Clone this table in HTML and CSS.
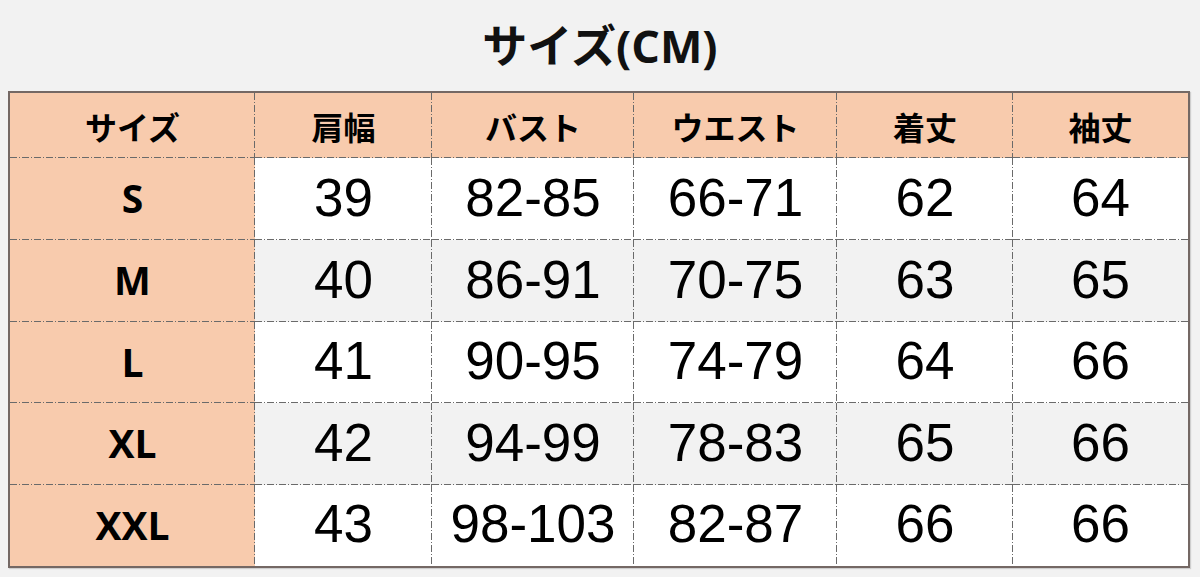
FILE: index.html
```html
<!DOCTYPE html>
<html lang="ja">
<head>
<meta charset="utf-8">
<link rel="stylesheet" href="styles.css">
</head>
<body>
<h1 class="title">サイズ(CM)</h1>
<div class="table">
  <div class="c hd">サイズ</div><div class="c hd">肩幅</div><div class="c hd">バスト</div><div class="c hd">ウエスト</div><div class="c hd">着丈</div><div class="c hd">袖丈</div>
  <div class="c sz">S</div><div class="c n">39</div><div class="c n">82-85</div><div class="c n">66-71</div><div class="c n">62</div><div class="c n">64</div>
  <div class="c sz">M</div><div class="c n alt">40</div><div class="c n alt">86-91</div><div class="c n alt">70-75</div><div class="c n alt">63</div><div class="c n alt">65</div>
  <div class="c sz">L</div><div class="c n">41</div><div class="c n">90-95</div><div class="c n">74-79</div><div class="c n">64</div><div class="c n">66</div>
  <div class="c sz">XL</div><div class="c n alt">42</div><div class="c n alt">94-99</div><div class="c n alt">78-83</div><div class="c n alt">65</div><div class="c n alt">66</div>
  <div class="c sz last">XXL</div><div class="c n last">43</div><div class="c n last">98-103</div><div class="c n last">82-87</div><div class="c n last">66</div><div class="c n last">66</div>
</div>
</body>
</html>
```
FILE: styles.css
```css
html, body {
  margin: 0;
  padding: 0;
  background: #f2f2f2;
}
body {
  width: 1200px;
  height: 577px;
  overflow: hidden;
}
.title {
  margin: 0;
  height: 91px;
  display: flex;
  align-items: center;
  justify-content: center;
  font-family: "Open Sans", "Noto Sans CJK JP", sans-serif;
  font-weight: 700;
  font-size: 45px;
  color: #111;
  padding-bottom: 4px;
  box-sizing: border-box;
}
.table {
  margin-left: 8px;
  width: 1182px;
  box-sizing: border-box;
  border: 2px solid #746864;
  box-shadow: 1px 1px 1px rgba(0,0,0,0.15);
  display: grid;
  grid-template-columns: 245px 177px 202px 203px 176px 175px;
  grid-template-rows: 65px 82px 82px 81px 82px 81px;
}
.c {
  display: flex;
  align-items: center;
  justify-content: center;
  background-color: #fff;
  background-image:
    repeating-linear-gradient(to right, #6a6a6a 0 7px, transparent 7px 9px, #6a6a6a 9px 10px, transparent 10px 12px),
    repeating-linear-gradient(to bottom, #6a6a6a 0 7px, transparent 7px 9px, #6a6a6a 9px 10px, transparent 10px 12px);
  background-size: 100% 1px, 1px 100%;
  background-position: left bottom, right top;
  background-repeat: no-repeat;
  color: #000;
}
.c:nth-child(6n) {
  background-size: 100% 1px, 0 0;
}
.c.last {
  background-size: 0 0, 1px 100%;
}
.c.last:nth-child(6n) {
  background-size: 0 0, 0 0;
}
.hd {
  background-color: #f8cbad;
  font-family: "Noto Sans CJK JP", sans-serif;
  font-weight: 700;
  font-size: 32px;
}
.sz {
  background-color: #f8cbad;
  font-family: "Open Sans", "Noto Sans CJK JP", sans-serif;
  font-weight: 700;
  font-size: 39px;
  padding-bottom: 3px;
}
.n {
  font-family: "Liberation Sans", Arial, sans-serif;
  font-size: 53px;
  padding-bottom: 4px;
}
.alt {
  background-color: #f2f2f2;
}
```
